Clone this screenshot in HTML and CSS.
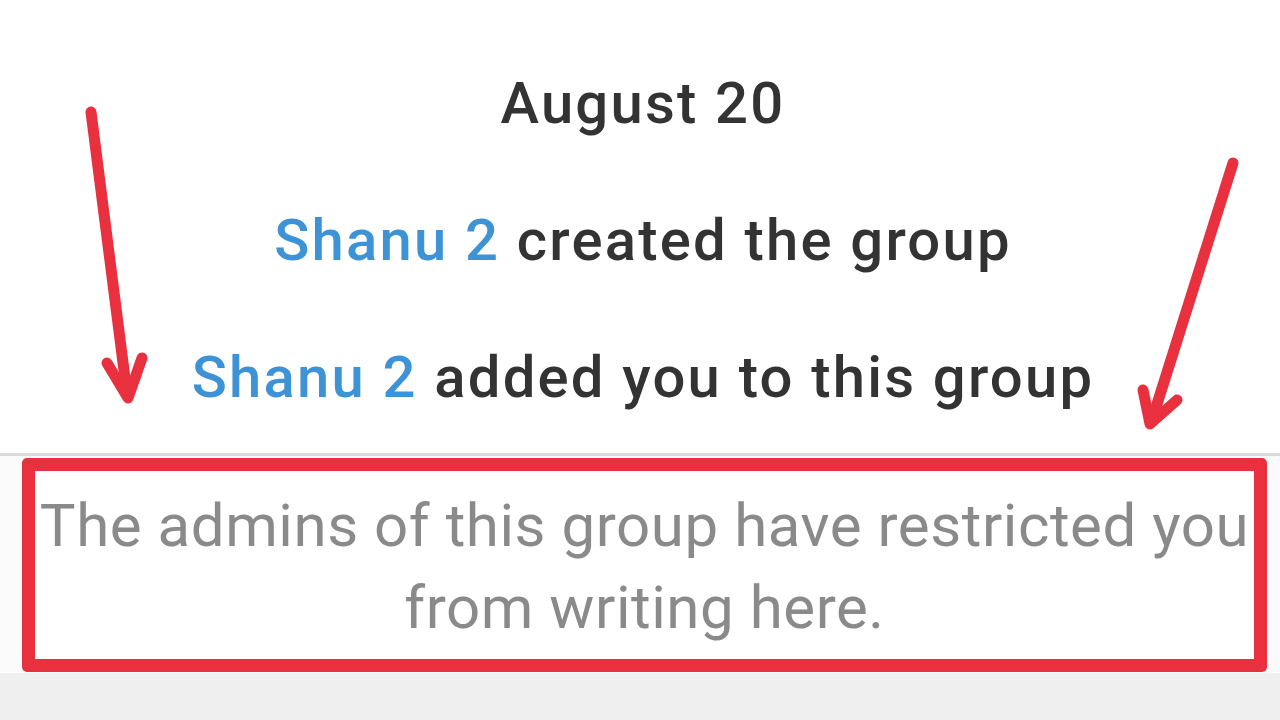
FILE: index.html
```html
<!DOCTYPE html>
<html lang="en">
<head>
    <meta charset="UTF-8">
    <meta name="viewport" content="width=device-width, initial-scale=1.0">
    <title>Group chat</title>
    <link rel="stylesheet" href="styles.css">
</head>
<body>
    <div class="chat">
        <div class="date">August 20</div>
        <div class="event"><span class="name">Shanu 2</span> created the group</div>
        <div class="event"><span class="name">Shanu 2</span> added you to this group</div>
    </div>

    <div class="notice-bar">
        <div class="notice-box">
            <p>The admins of this group have restricted you from writing here.</p>
        </div>
    </div>

    <div class="footer"></div>

    <!-- annotation arrows drawn over the screenshot -->
    <svg class="arrows" width="1280" height="720" viewBox="0 0 1280 720">
        <g fill="none" stroke="#e8303f" stroke-width="11" stroke-linecap="round" stroke-linejoin="round">
            <path d="M91 112 L127 394"/>
            <path d="M107 363 L128 398 L142 358"/>
            <path d="M1233 163 L1152 420"/>
            <path d="M1143 390 L1150 424 L1177 400"/>
        </g>
    </svg>
</body>
</html>
```

FILE: styles.css
```css
body {
    margin: 0;
    font-family: Roboto, "Liberation Sans", sans-serif;
    background-color: #ffffff;
    width: 1280px;
    height: 720px;
    overflow: hidden;
    position: relative;
}

.chat {
    height: 453px;
    box-sizing: border-box;
    padding-top: 63px;
    display: flex;
    flex-direction: column;
    align-items: center;
    gap: 57px;
}

.date,
.event {
    font-size: 58px;
    line-height: 80px;
    font-weight: 500;
    letter-spacing: 2.2px;
    color: #333333;
    padding-left: 6px;
}

.name {
    color: #3d93d6;
}

.notice-bar {
    border-top: 3px solid #dcdcdc;
    background: #fbfbfb;
    padding: 2px 13px 1px 22px;
}

.notice-box {
    border: 13px solid #e8303f;
    border-radius: 5px;
    background: #ffffff;
    height: 214px;
    box-sizing: border-box;
    text-align: center;
}

.notice-box p {
    margin: 0;
    padding-top: 14px;
    font-size: 60px;
    line-height: 82px;
    letter-spacing: 0.55px;
    color: #8a8a8a;
}

.footer {
    height: 48px;
    background: #efefef;
}

.arrows {
    position: absolute;
    left: 0;
    top: 0;
    pointer-events: none;
}
```
